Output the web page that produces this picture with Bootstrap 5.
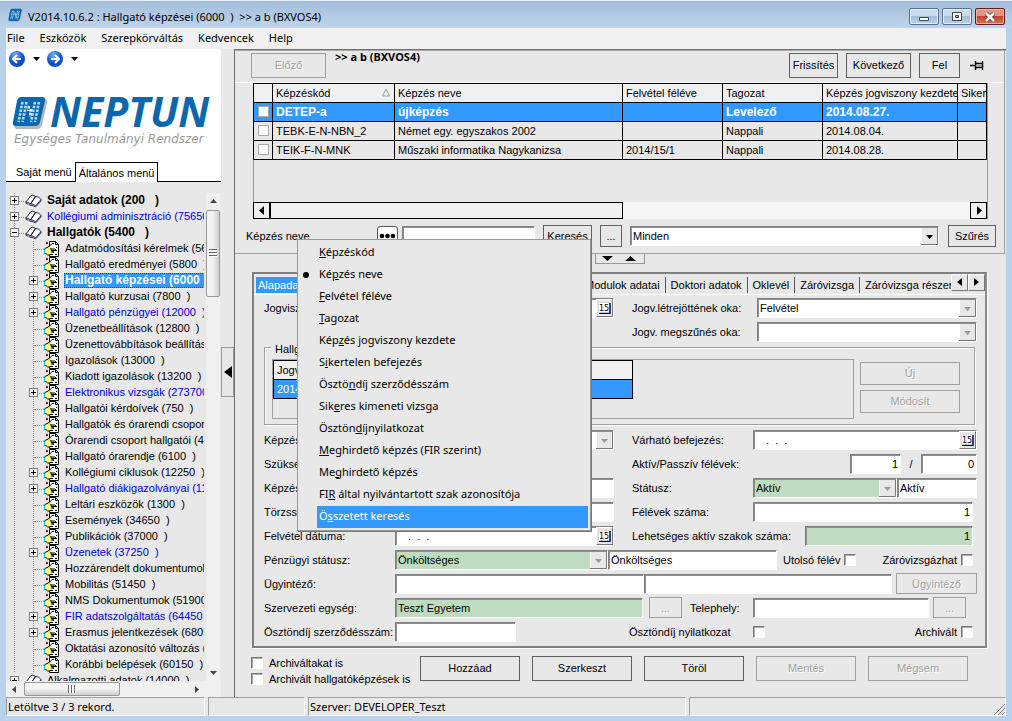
<!DOCTYPE html>
<html lang="hu">
<head>
<meta charset="utf-8">
<meta name="viewport" content="width=device-width, initial-scale=1">
<title>Hallgató képzései (6000)</title>
<link href="https://cdn.jsdelivr.net/npm/bootstrap@5.3.0/dist/css/bootstrap.min.css" rel="stylesheet">
<script src="https://cdn.jsdelivr.net/npm/bootstrap@5.3.0/dist/js/bootstrap.bundle.min.js"></script>
<style>
:root{--face:#e8e8e8;--pick:#3399ff;--ok:#c0dcc0}
body{background:#b9d1ea;font:11px/16px "Liberation Sans",Arial,sans-serif;color:#000;overflow:hidden}
button,input,select{font:inherit;color:inherit;border-radius:0}
a{color:inherit;text-decoration:none}
.ui{font-family:"Noto Sans","Open Sans",sans-serif}
.titlebar{height:28px;padding:7px 7px 0 8px;background:linear-gradient(#a3bedb,#bfd4eb);border-top:1px solid #e6eef7}
.caption{font-size:11px;line-height:17px;margin-left:5px}
.wbtn{width:30px;height:17px;padding:0;border:1px solid #57708c;border-radius:2px;background:linear-gradient(#c9dcef 45%,#a3bfdc 50%,#b9d2ea);box-shadow:inset 0 0 0 1px #e3eefa;line-height:0}
.wbtn.shut{border-color:#5e2018;background:linear-gradient(#e09585 45%,#c8412b 50%,#d8735c);box-shadow:inset 0 0 0 1px #eab0a4}
.client{margin:0 6px 5px;background:var(--face);min-height:0}
.menus{height:21px;background:#f0f0f0;padding:1px 0 0 1px}
.menus a{font-size:11px;line-height:17px;margin-right:15px}
.side{width:215px;min-height:0}
.brand{height:113px}
.brandname{font:italic 700 41px/40px "Open Sans",sans-serif;color:#0b67ad;margin-left:2px}
.brandsub{font:italic 12px/16px "DejaVu Sans",sans-serif;color:#9a9a9a}
.brandmark{margin-top:6px}
.sidetabs{height:20px;border-bottom:1px solid #000;padding-left:10px}
.sidetabs a{height:20px;line-height:20px;white-space:nowrap}
.sidetabs a.on{background:#fff;border:1px solid #000;border-bottom:0;padding:0 3px;margin-left:3px}
.treebox{min-height:0;margin-top:11px}
.tree{overflow:hidden;position:relative;min-width:0;margin-right:2px}
.tree ul{list-style:none;margin:0;padding:0}
.tree li{white-space:nowrap}
.node{height:16px;display:flex;align-items:center;position:relative;padding-left:4px}
.trunk{background:linear-gradient(#888 50%,transparent 50%) 8px 8px/1px 2px repeat-y}
.trunk .trunk{background-position:27px 0}
.trunk .trunk .node{padding-left:23px}
.node::before{content:"";position:absolute;left:9px;width:11px;border-top:1px dotted #888;top:8px}
.trunk .trunk .node::before{left:28px;width:12px}
.pm{width:9px;height:9px;flex:none;border:1px solid #808080;background:linear-gradient(#000,#000) center/5px 1px no-repeat,linear-gradient(#000,#000) center/1px 5px no-repeat,#fff;position:relative;padding:0}
.pm.open{background:linear-gradient(#000,#000) center/5px 1px no-repeat,#fff}
.pm.none{visibility:hidden}
.node svg{flex:none;position:relative;margin:0 4px 0 6px}
.trunk .trunk .node svg{margin:0 4px 0 6px}
.node a{padding:0 1px;line-height:15px}
.blue{color:#0000e0}
.heavy{font-weight:700;font-size:12px}
.node a.cur{background:var(--pick);color:#fff;outline:1px dotted #3a5a20;outline-offset:-1px;flex:1}
.vbar{width:14px;background:#f0f0f0;padding:6px 0;margin-right:1px}
.vthumb{width:14px;height:87px;margin-top:7px;border:1px solid #999;border-radius:2px;background:linear-gradient(90deg,#f4f4f4 45%,#cfcfd1)}
.hbar{height:16px;background:#f0f0f0;padding:0 22px 0 6px}
.hthumb{width:96px;height:14px;margin-left:8px;border:1px solid #999;border-radius:2px;background:linear-gradient(#f4f4f4 45%,#cfcfd1)}
.grip{width:8px;height:8px;background:repeating-linear-gradient(#666 0 1px,#fff 1px 3px)}
.grip.h{background:repeating-linear-gradient(90deg,#666 0 1px,#fff 1px 3px)}
.splitcol{width:13px}
.fold{width:13px;height:50px;border:1px solid #999;background:var(--face);padding:0;margin-top:298px;line-height:0}
.work{border-left:1px solid #707070;border-top:1px solid #707070;min-width:0;position:relative;box-shadow:inset 0 1px #aaa}
.flat{border:1px solid #606060;background:var(--face);padding:0 2px;white-space:nowrap}
.flat:disabled{border-color:#a0a0a0;color:#a0a0a0;text-shadow:1px 1px #fff}
.bar{height:33px;border-bottom:1px solid #fff;padding:3px 19px 0 16px}
.bar .flat{height:25px}
.heading{font:700 11px/14px "Noto Sans",sans-serif;margin-left:9px;margin-top:-3px}
.upper{border-bottom:1px solid #a0a0a0;border-right:1px solid #a0a0a0;margin-right:1px}
.gridbox{height:136px;margin:0 16px 0 18px;box-shadow:inset 1px 0 #999;border-right:1px solid #999;overflow:hidden}
.gridbox table{table-layout:fixed;width:100%;border-collapse:collapse}
.cells td,.cells th{height:19px;border:1px solid #000;padding:0 3px;font-weight:400;white-space:nowrap;overflow:hidden;line-height:18px}
.cells th{background:#f0f0f0}
.cells tr.sel td{background:var(--pick);color:#fff;font-weight:700;font-size:12px}
.cells input{appearance:none;width:11px;height:11px;background:#fff;border:1px solid #aaa;display:block;margin:0 auto}
.hscroll{height:17px;background:#f6f6f6}
.sbtn{width:17px;height:17px;border:1px solid #000;background:#f0f0f0;padding:0;line-height:0}
.sthumb{width:353px;border:1px solid #000;background:#f0f0f0}
.find{height:34px;padding:0 8px 0 11px}
.find .flat{height:22px}
.fld{height:20px;border:1px solid;border-color:#808080 #fff #fff #808080;box-shadow:inset 1px 1px #909090;background-color:#fff;padding:1px 2px;min-width:0;outline:0}
select.fld{appearance:none;background-repeat:no-repeat;background-position:right 0 center;background-image:url("data:image/svg+xml,%3Csvg xmlns='http://www.w3.org/2000/svg' width='17' height='18'%3E%3Cpath d='M0 0h17v18H0z' fill='%23e8e8e8'/%3E%3Cpath d='M16.500 0v17.500H0' fill='none' stroke='%23777'/%3E%3Cpath d='M.5 17V.5H16' fill='none' stroke='%23fff'/%3E%3Cpath d='M5 8h7l-3.500 4z' fill='%23999'/%3E%3C/svg%3E")}
select.fld.live{background-image:url("data:image/svg+xml,%3Csvg xmlns='http://www.w3.org/2000/svg' width='17' height='18'%3E%3Cpath d='M0 0h17v18H0z' fill='%23e8e8e8'/%3E%3Cpath d='M16.500 0v17.500H0' fill='none' stroke='%23777'/%3E%3Cpath d='M.5 17V.5H16' fill='none' stroke='%23fff'/%3E%3Cpath d='M5 8h7l-3.500 4z'/%3E%3C/svg%3E")}
.fld.ok{background-color:var(--ok)}
.dots3{width:21px;height:20px;border:1px solid #555;border-radius:3px;background:#fff;padding:0;line-height:0}
.handle{width:50px;height:10px;border:1px solid #999;border-top:0;margin-left:360px;line-height:0}
.handle button{border:0;background:none;padding:0 6px;line-height:0}
.tabpanel{margin:8px 19px 0 17px;border:2px solid #808080;border-right-color:#8a8a8a;box-shadow:1px 1px #fff}
.strip{height:21px;white-space:nowrap;overflow:hidden;border-bottom:1px solid #fff}
.strip a{padding:0 5px;line-height:16px;height:16px;margin-top:3px;border-right:1px solid #555}
.strip a.on{background:var(--pick);color:#fff;padding:0 2px;margin-left:2px;border:0;width:75px}
.strip .gap{width:254px}
.strip button{width:17px;height:17px;padding:0;border:1px solid;border-color:#fff #777 #777 #fff;background:var(--face);line-height:0}
.page{padding:1px 8px 2px 10px}
.line{height:24px;display:flex;align-items:center;white-space:nowrap}
.lh{width:350px;margin-right:18px;display:flex;align-items:center;flex:none}
.rh{flex:1;display:flex;align-items:center;min-width:0}
.l1{width:131px;flex:none}.l2{width:125px;flex:none}.l3{width:121px;flex:none}.l4{width:173px;flex:none}
.dt{position:relative;display:flex;flex:1;min-width:0}
.dt .fld{flex:1;padding-left:12px}
.dt button{position:absolute;right:1px;top:1px;width:17px;height:18px;border:1px solid;border-color:#fff #777 #777 #fff;background:var(--face);padding:0;line-height:0}
.frame{border:1px solid #a0a0a0;box-shadow:1px 1px #fff,inset 1px 1px #fff;height:78px;margin:3px 2px 3px 0;position:relative;padding:11px 14px 0 7px}
.frame legend{position:absolute;top:-7px;left:6px;width:auto;font-size:11px;line-height:16px;background:var(--face);padding:0 4px;margin:0;float:none}
.inner{border:1px solid #a0a0a0;height:60px;flex:1;margin-right:6px}
.inner table{width:360px;border-collapse:collapse}
.inner .cells tr.sel td{font-weight:400;font-size:11px}
.box{appearance:none;width:12px;height:12px;background:#fff;border:1px solid;border-color:#777 #fff #fff #777;box-shadow:inset 1px 1px #aaa;margin:0;flex:none}
.foot{padding:8px 0 0 16px}
.foot .flat{width:100px;height:25px;margin-right:12px}
.foot .checks{width:169px;margin-top:-1px}
.checks .box{margin-right:6px}
.pop{left:62px;top:189px;width:294px;height:292px;z-index:5;background:var(--face);border:1px solid #999;padding:2px 2px 0 19px;list-style:none;margin:0;box-shadow:1px 1px #777}
.pop a{display:block;height:22px;line-height:20px;padding-left:2px;font-size:11px;position:relative}
.pop a.hot{background:var(--pick);color:#fff}
.pop a.dotted::before{content:"";position:absolute;left:-14px;top:8px;width:6px;height:6px;border-radius:50%;background:#000}
.status{height:19px;gap:3px}
.status div{border:1px solid;border-color:#a0a0a0 #fff #fff #a0a0a0;font-size:11px;line-height:17px;padding-left:1px}
</style>
</head>
<body class="vh-100 d-flex flex-column">
<svg width="0" height="0" class="position-absolute" aria-hidden="true">
<symbol id="pg" viewBox="0 0 16 16"><path d="M5.500 .5h6l3 3v12h-9z" fill="#fff" stroke="#000"/><path d="M11.500 .5v3h3M8 2.500h2M12 6.500h1M12 9.500h1M11 13.500h2" stroke="#000" fill="none"/><path d="M1 7.500l4-2 3-.5 1 1-2 2h4v1.500h-1.500V11H9v1.500H8l-1 1.500H3l-2-2z" fill="#ffff70"/><path d="M1 7.500l4-2 3-3M7 8h4l1.500 1.500H7M7 11h3M6 13.500h3M1.500 12l2 2h3M6 7l4 5" fill="none" stroke="#000"/><path d="M.5 7v6" stroke="#00b0b0"/><path d="M2 1l2 2M4 1L2 3" stroke="#a00030"/></symbol>
<symbol id="bk" viewBox="0 0 17 14"><path d="M1 8L6 1.500q2-1 4.500 1L5.500 10Q3.500 8 1 8zM5.500 10l5-7.500q3-.5 5.500 3L10.500 12Q8 9.500 5.500 10z" fill="#fff" stroke="#101030" stroke-width=".9"/><path d="M1 8v1.500q2.500 0 4.500 2 2.500-.5 5 1.500L16 7V5.500" fill="none" stroke="#202070" stroke-width=".9"/></symbol>
<symbol id="cal" viewBox="0 0 13 12"><path d="M0 0h12v11H0z" fill="#fff"/><path d="M12 1v10.500H1" fill="none" stroke="#000060" stroke-width="1.500"/><path d="M.5 11V.5H12" fill="none" stroke="#bbb" stroke-width=".6"/><text x="1" y="9" font-size="8" font-family="DejaVu Sans, sans-serif">15</text></symbol>
<symbol id="mk" viewBox="0 0 36 32"><path d="M10 2h22q4 0 3 4l-5 22q-1 4-5 4H5q-3 0-3-4L7 6q1-4 3-4z" fill="#b4b8bd"/><path d="M9 0h21q4 0 3 4l-5 21q-1 4-5 4H4q-4 0-3-4L5 4q1-4 4-4z" fill="#0b67ad"/><path d="M10.500 5L6.500 25M14.500 5l-4 20M27 5l-4 20M23 5l-4 20" stroke="#b5dcf5" stroke-width="2.600" stroke-dasharray="2.600 1.200"/><path d="M17 9l-1 5M19 12l-1 8" stroke="#e8f5fd" stroke-width="2.600" stroke-dasharray="2.600 1.200" fill="none"/></symbol>
</svg>

<header class="titlebar d-flex align-items-start">
<svg width="15" height="15"><use href="#mk"/></svg>
<span class="caption ui">V2014.10.6.2 : Hallgató képzései (6000&nbsp; )&nbsp; &gt;&gt; a b (BXVOS4)</span>
<div class="ms-auto d-flex" style="gap:3px">
<button class="wbtn" aria-label="Kis méret"><svg width="14" height="10"><path d="M2.500 5.500h9v3h-9z" fill="#fff" stroke="#444"/></svg></button>
<button class="wbtn" aria-label="Teljes méret"><svg width="14" height="10"><path d="M2.500 .5h9v8h-9z" fill="#fff" stroke="#444"/><path d="M5.500 3.500h3v2h-3z" fill="#9bb" stroke="#444"/></svg></button>
<button class="wbtn shut" aria-label="Bezárás"><svg width="14" height="10"><path d="M3 1l8 8M11 1L3 9" stroke="#533" stroke-width="4"/><path d="M3 1l8 8M11 1L3 9" stroke="#fff" stroke-width="2.500"/></svg></button>
</div>
</header>

<div class="client flex-grow-1 d-flex flex-column">
<nav class="menus ui d-flex"><a href="#">File</a><a href="#">Eszközök</a><a href="#">Szerepkörváltás</a><a href="#">Kedvencek</a><a href="#">Help</a></nav>

<div class="d-flex flex-grow-1" style="min-height:0">
<aside class="side d-flex flex-column flex-shrink-0">
<div class="bg-white">
<div class="brand">
<svg width="90" height="20" class="d-block"><defs><radialGradient id="g" cx=".4" cy=".25"><stop offset="0" stop-color="#6fb2ff"/><stop offset="1" stop-color="#0b4fc4"/></radialGradient></defs><circle cx="11" cy="10" r="8" fill="url(#g)"/><path d="M15 10H7M11 6l-4 4 4 4" stroke="#fff" stroke-width="2" fill="none"/><path d="M27 8h7l-3.500 4z"/><circle cx="49" cy="10" r="8" fill="url(#g)"/><path d="M45 10h8M49 6l4 4-4 4" stroke="#fff" stroke-width="2" fill="none"/><path d="M65 8h7l-3.500 4z"/></svg>
<div class="d-flex" style="padding:22px 0 0 6px"><svg class="brandmark flex-shrink-0" width="36" height="32"><use href="#mk"/></svg><span class="brandname">NEPTUN</span></div>
<div class="brandsub text-nowrap ps-2">Egységes Tanulmányi Rendszer</div>
</div>
<nav class="sidetabs d-flex"><a href="#">Saját menü</a><a href="#" class="on">Általános menü</a></nav>
</div>
<div class="treebox d-flex flex-grow-1">
<nav class="tree flex-grow-1">
<ul>
<li class="trunk"><div class="node"><button class="pm" aria-label="Kinyit"></button><svg width="17" height="14"><use href="#bk"/></svg><a href="#" class="heavy">Saját adatok (200&nbsp;&nbsp; )</a></div></li>
<li class="trunk"><div class="node"><button class="pm" aria-label="Kinyit"></button><svg width="17" height="14"><use href="#bk"/></svg><a href="#" class="blue">Kollégiumi adminisztráció (75650&nbsp; )</a></div></li>
<li class="trunk"><div class="node"><button class="pm open" aria-label="Bezár"></button><svg width="17" height="14"><use href="#bk"/></svg><a href="#" class="heavy">Hallgatók (5400&nbsp;&nbsp; )</a></div>
<ul class="trunk">
<li><div class="node"><span class="pm none"></span><svg width="16" height="16"><use href="#pg"/></svg><a href="#">Adatmódosítási kérelmek (5600&nbsp; )</a></div></li>
<li><div class="node"><span class="pm none"></span><svg width="16" height="16"><use href="#pg"/></svg><a href="#">Hallgató eredményei (5800&nbsp; )</a></div></li>
<li><div class="node"><button class="pm" aria-label="Kinyit"></button><svg width="16" height="16"><use href="#pg"/></svg><a href="#" class="heavy cur">Hallgató képzései (6000&nbsp; )</a></div></li>
<li><div class="node"><button class="pm" aria-label="Kinyit"></button><svg width="16" height="16"><use href="#pg"/></svg><a href="#">Hallgató kurzusai (7800&nbsp; )</a></div></li>
<li><div class="node"><button class="pm" aria-label="Kinyit"></button><svg width="16" height="16"><use href="#pg"/></svg><a href="#" class="blue">Hallgató pénzügyei (12000&nbsp; )</a></div></li>
<li><div class="node"><span class="pm none"></span><svg width="16" height="16"><use href="#pg"/></svg><a href="#">Üzenetbeállítások (12800&nbsp; )</a></div></li>
<li><div class="node"><span class="pm none"></span><svg width="16" height="16"><use href="#pg"/></svg><a href="#">Üzenettovábbítások beállításai</a></div></li>
<li><div class="node"><span class="pm none"></span><svg width="16" height="16"><use href="#pg"/></svg><a href="#">Igazolások (13000&nbsp; )</a></div></li>
<li><div class="node"><span class="pm none"></span><svg width="16" height="16"><use href="#pg"/></svg><a href="#">Kiadott igazolások (13200&nbsp; )</a></div></li>
<li><div class="node"><button class="pm" aria-label="Kinyit"></button><svg width="16" height="16"><use href="#pg"/></svg><a href="#" class="blue">Elektronikus vizsgák (273700&nbsp; )</a></div></li>
<li><div class="node"><span class="pm none"></span><svg width="16" height="16"><use href="#pg"/></svg><a href="#">Hallgatói kérdoívek (750&nbsp; )</a></div></li>
<li><div class="node"><span class="pm none"></span><svg width="16" height="16"><use href="#pg"/></svg><a href="#">Hallgatók és órarendi csoportok</a></div></li>
<li><div class="node"><span class="pm none"></span><svg width="16" height="16"><use href="#pg"/></svg><a href="#">Órarendi csoport hallgatói (4300&nbsp; )</a></div></li>
<li><div class="node"><span class="pm none"></span><svg width="16" height="16"><use href="#pg"/></svg><a href="#">Hallgató órarendje (6100&nbsp; )</a></div></li>
<li><div class="node"><button class="pm" aria-label="Kinyit"></button><svg width="16" height="16"><use href="#pg"/></svg><a href="#">Kollégiumi ciklusok (12250&nbsp; )</a></div></li>
<li><div class="node"><button class="pm" aria-label="Kinyit"></button><svg width="16" height="16"><use href="#pg"/></svg><a href="#" class="blue">Hallgató diákigazolványai (1100&nbsp; )</a></div></li>
<li><div class="node"><span class="pm none"></span><svg width="16" height="16"><use href="#pg"/></svg><a href="#">Leltári eszközök (1300&nbsp; )</a></div></li>
<li><div class="node"><span class="pm none"></span><svg width="16" height="16"><use href="#pg"/></svg><a href="#">Események (34650&nbsp; )</a></div></li>
<li><div class="node"><span class="pm none"></span><svg width="16" height="16"><use href="#pg"/></svg><a href="#">Publikációk (37000&nbsp; )</a></div></li>
<li><div class="node"><button class="pm" aria-label="Kinyit"></button><svg width="16" height="16"><use href="#pg"/></svg><a href="#" class="blue">Üzenetek (37250&nbsp; )</a></div></li>
<li><div class="node"><span class="pm none"></span><svg width="16" height="16"><use href="#pg"/></svg><a href="#">Hozzárendelt dokumentumok</a></div></li>
<li><div class="node"><span class="pm none"></span><svg width="16" height="16"><use href="#pg"/></svg><a href="#">Mobilitás (51450&nbsp; )</a></div></li>
<li><div class="node"><span class="pm none"></span><svg width="16" height="16"><use href="#pg"/></svg><a href="#">NMS Dokumentumok (51900&nbsp; )</a></div></li>
<li><div class="node"><button class="pm" aria-label="Kinyit"></button><svg width="16" height="16"><use href="#pg"/></svg><a href="#" class="blue">FIR adatszolgáltatás (64450&nbsp; )</a></div></li>
<li><div class="node"><button class="pm" aria-label="Kinyit"></button><svg width="16" height="16"><use href="#pg"/></svg><a href="#">Erasmus jelentkezések (68050&nbsp; )</a></div></li>
<li><div class="node"><span class="pm none"></span><svg width="16" height="16"><use href="#pg"/></svg><a href="#">Oktatási azonosító változás (7</a></div></li>
<li><div class="node"><span class="pm none"></span><svg width="16" height="16"><use href="#pg"/></svg><a href="#">Korábbi belépések (60150&nbsp; )</a></div></li>
</ul></li>
<li><div class="node"><button class="pm" aria-label="Kinyit"></button><svg width="17" height="14"><use href="#bk"/></svg><a href="#">Alkalmazotti adatok (14000&nbsp; )</a></div></li>
</ul>
</nav>
<div class="vbar d-flex flex-column align-items-center"><svg width="7" height="4"><path d="M0 4h7L3.500 0z" fill="#444"/></svg><div class="vthumb d-flex align-items-center justify-content-center"><span class="grip"></span></div><svg class="mt-auto" width="7" height="4"><path d="M0 0h7L3.500 4z" fill="#444"/></svg></div>
</div>
<div class="hbar d-flex align-items-center"><svg width="4" height="7"><path d="M4 0v7L0 3.500z" fill="#444"/></svg><div class="hthumb d-flex align-items-center justify-content-center"><span class="grip h"></span></div><svg class="ms-auto" width="4" height="7"><path d="M0 0v7l4-3.500z" fill="#444"/></svg></div>
</aside>
<div class="splitcol flex-shrink-0"><button class="fold" aria-label="Összecsuk"><svg width="9" height="12"><path d="M9 0v12L1 6z"/></svg></button></div>

<main class="work flex-grow-1">
<div class="upper">
<div class="bar d-flex">
<button class="flat" style="width:75px" disabled>Előző</button><span class="heading">&gt;&gt; a b (BXVOS4)</span>
<div class="ms-auto d-flex"><button class="flat me-2" style="width:49px">Frissítés</button><button class="flat me-2" style="width:65px">Következő</button><button class="flat me-2" style="width:41px">Fel</button><svg width="17" height="14" class="mt-1"><path d="M2 8.500h5M7.500 4v9M8 6.500h6M8 10.500h6M14.500 4v9" stroke="#000" fill="none" stroke-width="1.500"/><path d="M9 9h5" stroke="#777"/></svg></div>
</div>
<div class="gridbox d-flex flex-column">
<table class="cells"><colgroup><col style="width:19px"><col style="width:122px"><col style="width:228px"><col style="width:100px"><col style="width:100px"><col style="width:135px"><col></colgroup>
<thead><tr><th></th><th><span class="d-flex justify-content-between align-items-center">Képzéskód<svg width="9" height="9"><path d="M.5 8h7L4 1z" fill="none" stroke="#999"/></svg></span></th><th>Képzés neve</th><th>Felvétel féléve</th><th>Tagozat</th><th>Képzés jogviszony kezdete</th><th>Sikertelen</th></tr></thead>
<tbody>
<tr class="sel"><td><input type="checkbox" aria-label="DETEP-a"></td><td>DETEP-a</td><td>újképzés</td><td></td><td>Levelező</td><td>2014.08.27.</td><td></td></tr>
<tr><td><input type="checkbox" aria-label="TEBK-E-N-NBN_2"></td><td>TEBK-E-N-NBN_2</td><td>Német egy. egyszakos 2002</td><td></td><td>Nappali</td><td>2014.08.04.</td><td></td></tr>
<tr><td><input type="checkbox" aria-label="TEIK-F-N-MNK"></td><td>TEIK-F-N-MNK</td><td>Műszaki informatika Nagykanizsa</td><td>2014/15/1</td><td>Nappali</td><td>2014.08.28.</td><td></td></tr>
</tbody></table>
<div class="hscroll d-flex mt-auto"><button class="sbtn" aria-label="Balra"><svg width="6" height="9"><path d="M5 0v9L0 4.500z"/></svg></button><div class="sthumb"></div><button class="sbtn ms-auto" aria-label="Jobbra"><svg width="6" height="9"><path d="M1 0v9l5-4.500z"/></svg></button></div>
</div>
<div class="find d-flex align-items-center">
<label for="q" style="width:131px">Képzés neve</label><button class="dots3" aria-label="Mező választása"><svg width="17" height="6"><circle cx="3" cy="3" r="2.300"/><circle cx="8.500" cy="3" r="2.300"/><circle cx="14" cy="3" r="2.300"/></svg></button><input id="q" class="fld ms-1" style="width:133px"><button class="flat ms-2" style="width:49px">Keresés</button><button class="flat ms-2" style="width:22px">...</button><select class="fld live ms-2 flex-grow-1" aria-label="Szűrő"><option>Minden</option></select><button class="flat" style="width:48px;margin-left:9px">Szűrés</button>
</div>
</div>
<div class="handle"><button aria-label="Le"><svg width="11" height="9"><path d="M0 2h11L5.500 7z"/></svg></button><button aria-label="Fel"><svg width="11" height="9"><path d="M0 7h11L5.500 2z"/></svg></button></div>

<section class="tabpanel">
<nav class="strip d-flex"><a href="#" class="on">Alapadatok</a><span class="gap"></span><a href="#" class="ps-0">Modulok adatai</a><a href="#">Doktori adatok</a><a href="#">Oklevél</a><a href="#">Záróvizsga</a><a href="#" class="flex-fill overflow-hidden border-0 pe-0" style="width:20px">Záróvizsga részeredmények</a><button aria-label="Előző fül"><svg width="5" height="8"><path d="M5 0v8L0 4z"/></svg></button><button aria-label="Következő fül"><svg width="5" height="8"><path d="M0 0v8l5-4z"/></svg></button></nav>
<div class="page">
<div class="line"><div class="lh"><label class="l1" for="a1">Jogviszony kezdete:</label><div class="dt"><input id="a1" class="fld"><button aria-label="Naptár"><svg width="13" height="12"><use href="#cal"/></svg></button></div></div><div class="rh"><label class="l2" for="b1">Jogv.létrejöttének oka:</label><select id="b1" class="fld flex-fill"><option>Felvétel</option></select></div></div>
<div class="line"><div class="lh"></div><div class="rh"><label class="l2" for="b2">Jogv. megszűnés oka:</label><select id="b2" class="fld flex-fill"><option></option></select></div></div>
<fieldset class="frame d-flex"><legend>Hallgatói jogviszony</legend>
<div class="inner"><table class="cells"><thead><tr><th>Jogviszony</th></tr></thead><tbody><tr class="sel"><td>2014.08.27.</td></tr></tbody></table></div>
<div class="d-flex flex-column" style="gap:5px;padding-top:3px"><button class="flat" style="width:100px;height:23px" disabled>Új</button><button class="flat" style="height:23px" disabled>Módosít</button></div>
</fieldset>
<div class="line"><div class="lh"><label class="l1" for="a3">Képzés típusa:</label><select id="a3" class="fld flex-fill"><option></option></select></div><div class="rh"><label class="l3" for="b3">Várható befejezés:</label><div class="dt"><input id="b3" class="fld" value=".  .  ."><button aria-label="Naptár"><svg width="13" height="12"><use href="#cal"/></svg></button></div></div></div>
<div class="line"><div class="lh"><span class="l1">Szükséges félévek:</span></div><div class="rh"><label for="b4">Aktív/Passzív félévek:</label><input id="b4" class="fld text-end ms-auto" style="width:51px" value="1"><span class="text-center" style="width:20px">/</span><input aria-label="Passzív félévek" class="fld text-end" style="width:56px" value="0"></div></div>
<div class="line"><div class="lh"><label class="l1" for="a5">Képzés neve:</label><input id="a5" class="fld flex-fill"></div><div class="rh"><label class="l3" for="b5">Státusz:</label><select id="b5" class="fld ok flex-fill"><option>Aktív</option></select><input aria-label="Státusz neve" class="fld" style="width:80px" value="Aktív"></div></div>
<div class="line"><div class="lh"><label class="l1" for="a6">Törzsszám:</label><input id="a6" class="fld flex-fill"></div><div class="rh"><label class="l3" for="b6">Félévek száma:</label><input id="b6" class="fld text-end flex-fill me-1" value="1"></div></div>
<div class="line"><div class="lh"><label class="l1" for="a7">Felvétel dátuma:</label><div class="dt"><input id="a7" class="fld" value=".  .  ."><button aria-label="Naptár"><svg width="13" height="12"><use href="#cal"/></svg></button></div></div><div class="rh"><label class="l4" for="b7">Lehetséges aktív szakok száma:</label><input id="b7" class="fld ok text-end flex-fill me-1" value="1"></div></div>
<div class="line"><label class="l1" for="a8">Pénzügyi státusz:</label><select id="a8" class="fld ok" style="width:213px"><option>Önköltséges</option></select><input aria-label="Pénzügyi státusz neve" class="fld" style="width:169px" value="Önköltséges"><label for="c1" style="margin-left:6px">Utolsó félév</label><input type="checkbox" id="c1" class="box ms-1"><label for="c2" class="ms-auto">Záróvizsgázhat</label><input type="checkbox" id="c2" class="box mx-1"></div>
<div class="line"><label class="l1" for="a9">Ügyintéző:</label><input id="a9" class="fld flex-fill"><input aria-label="Ügyintéző neve" class="fld flex-fill"><button class="flat ms-1" style="width:81px;height:21px" disabled>Ügyintéző</button></div>
<div class="line"><label class="l1" for="a10">Szervezeti egység:</label><input id="a10" class="fld ok" style="width:248px" value="Teszt Egyetem"><button class="flat" style="width:33px;height:21px;margin:0 8px 0 6px" disabled>...</button><label for="b10" style="width:63px">Telephely:</label><input id="b10" class="fld flex-fill"><button class="flat" style="width:33px;height:21px;margin:0 11px 0 4px" disabled>...</button></div>
<div class="line"><label class="l1" for="a11">Ösztöndíj szerződésszám:</label><input id="a11" class="fld" style="width:121px"><label for="c3" style="width:124px;margin-left:113px">Ösztöndíj nyilatkozat</label><input type="checkbox" id="c3" class="box"><label for="c4" class="ms-auto">Archivált</label><input type="checkbox" id="c4" class="box mx-1"></div>
</div>
</section>
<div class="foot d-flex align-items-start">
<div class="checks text-nowrap"><div class="d-flex align-items-center"><input type="checkbox" id="d1" class="box"><label for="d1">Archiváltakat is</label></div><div class="d-flex align-items-center"><input type="checkbox" id="d2" class="box"><label for="d2">Archivált hallgatóképzések is</label></div></div>
<button class="flat">Hozzáad</button><button class="flat">Szerkeszt</button><button class="flat">Töröl</button><button class="flat" disabled>Mentés</button><button class="flat" disabled>Mégsem</button>
</div>

<ul class="pop ui position-absolute">
<li><a href="#"><u>K</u>épzéskód</a></li><li><a href="#" class="dotted">Ké<u>p</u>zés neve</a></li><li><a href="#"><u>F</u>elvétel féléve</a></li><li><a href="#"><u>T</u>agozat</a></li><li><a href="#">Kép<u>z</u>és jogviszony kezdete</a></li><li><a href="#">S<u>i</u>kertelen befejezés</a></li><li><a href="#">Ösztö<u>n</u>díj szerződésszám</a></li><li><a href="#">Sik<u>e</u>res kimeneti vizsga</a></li><li><a href="#">Ösztön<u>d</u>íjnyilatkozat</a></li><li><a href="#"><u>M</u>eghirdető képzés (FIR szerint)</a></li><li><a href="#">Me<u>g</u>hirdető képzés</a></li><li><a href="#">FI<u>R</u> által nyilvántartott szak azonosítója</a></li><li><a href="#" class="hot">Ö<u>s</u>szetett keresés</a></li>
</ul>
</main>
</div>
<footer class="status ui d-flex"><div style="width:199px">Letöltve 3 / 3 rekord.</div><div style="width:97px"></div><div style="width:378px">Szerver: DEVELOPER_Teszt</div><div class="flex-fill text-end"><svg width="13" height="15"><path d="M2 14L13 3M6 14l7-7M10 14l3-3" stroke="#888"/></svg></div></footer>
</div>
</body>
</html>
